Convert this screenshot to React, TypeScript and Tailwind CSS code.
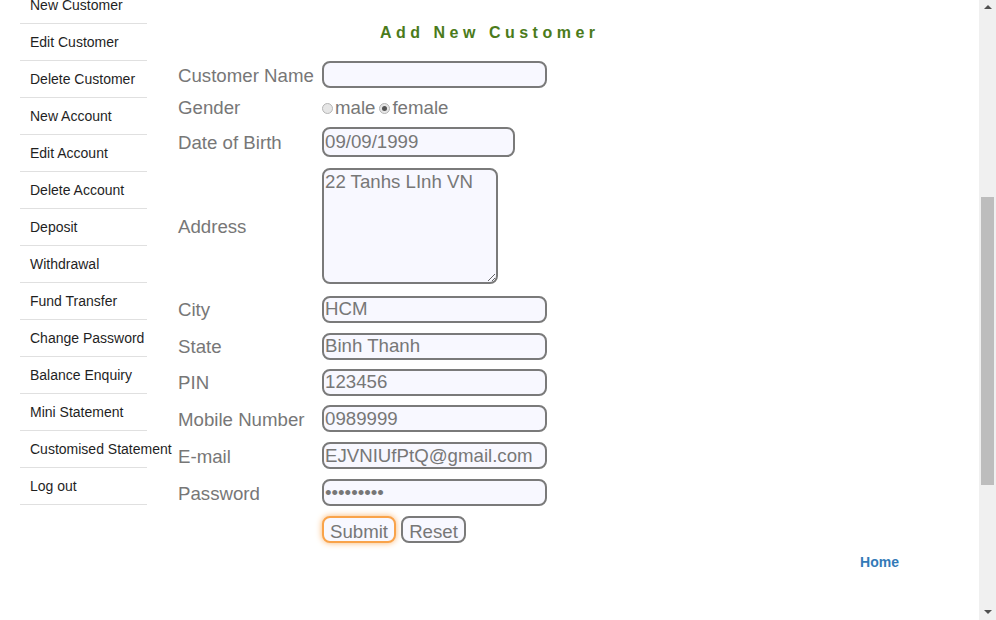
import React from 'react'

const menu = [
  'New Customer',
  'Edit Customer',
  'Delete Customer',
  'New Account',
  'Edit Account',
  'Delete Account',
  'Deposit',
  'Withdrawal',
  'Fund Transfer',
  'Change Password',
  'Balance Enquiry',
  'Mini Statement',
  'Customised Statement',
  'Log out',
]

const inputCls =
  'h-[27px] rounded-[8px] border-2 border-[#7a7a7a] bg-[#f8f8ff] px-[1px] text-[18.67px] text-[#777] outline-none'

function Row({ label, h, children }: { label: string; h: string; children?: React.ReactNode }) {
  return (
    <div className={`flex items-center ${h}`}>
      <div className="w-[144px] pt-[2px] text-[18.67px] text-[#777]">{label}</div>
      <div className="flex items-center">{children}</div>
    </div>
  )
}

function Radio({ checked }: { checked?: boolean }) {
  return (
    <span className="flex h-[11px] w-[11px] shrink-0 items-center justify-center rounded-full border border-[#b5b5b5] bg-[#e6e6e6]">
      {checked && <span className="h-[5px] w-[5px] rounded-full bg-[#555]" />}
    </span>
  )
}

export default function App() {
  return (
    <div className="flex h-[620px] w-[996px] overflow-hidden bg-white font-['Liberation_Sans',Arial,sans-serif]">
      <div className="flex w-[979px]">
        {/* left menu */}
        <ul className="ml-[20px] -mt-[14px] w-[127px] shrink-0 border-t border-[#e0e0e0]">
          {menu.map(m => (
            <li
              key={m}
              className="flex h-[37px] items-center whitespace-nowrap border-b border-[#e0e0e0] pl-[10px] text-[14px] text-[#1f1f1f]"
            >
              {m}
            </li>
          ))}
        </ul>

        {/* form */}
        <div className="ml-[31px] flex flex-1 flex-col">
          <p className="ml-[202px] mt-[23px] h-[20px] text-[16px] font-bold leading-[20px] tracking-[4.5px] text-[#4b7b1b]">
            Add New Customer
          </p>
          <div className="mt-[15px] flex flex-col">
            <Row label="Customer Name" h="h-[33px]">
              <input className={`${inputCls} w-[225px]`} readOnly defaultValue="" />
            </Row>
            <Row label="Gender" h="h-[32px]">
              <div className="flex items-center pt-[2px] text-[18.67px] text-[#777]">
                <Radio />
                <span className="ml-[2px]">male</span>
                <span className="ml-[4px]">
                  <Radio checked />
                </span>
                <span className="ml-[2px]">female</span>
              </div>
            </Row>
            <Row label="Date of Birth" h="h-[38px]">
              <input className={`${inputCls} h-[30px] w-[193px]`} readOnly defaultValue="09/09/1999" />
            </Row>
            <Row label="Address" h="h-[129px]">
              <textarea
                className="h-[116px] w-[176px] rounded-[8px] border-2 border-[#7a7a7a] bg-[#f8f8ff] px-[1px] pt-[1px] text-[18.67px] leading-[22px] text-[#777] outline-none"
                readOnly
                defaultValue="22 Tanhs LInh VN"
              />
            </Row>
            <Row label="City" h="h-[38px]">
              <input className={`${inputCls} w-[225px]`} readOnly defaultValue="HCM" />
            </Row>
            <Row label="State" h="h-[36px]">
              <input className={`${inputCls} w-[225px]`} readOnly defaultValue="Binh Thanh" />
            </Row>
            <Row label="PIN" h="h-[36px]">
              <input className={`${inputCls} w-[225px]`} readOnly defaultValue="123456" />
            </Row>
            <Row label="Mobile Number" h="h-[37px]">
              <input className={`${inputCls} w-[225px]`} readOnly defaultValue="0989999" />
            </Row>
            <Row label="E-mail" h="h-[37px]">
              <input className={`${inputCls} w-[225px]`} readOnly defaultValue="EJVNIUfPtQ@gmail.com" />
            </Row>
            <Row label="Password" h="h-[37px]">
              <input type="password" className={`${inputCls} w-[225px]`} readOnly defaultValue="123456789" />
            </Row>
            <Row label="" h="h-[37px]">
              <button className="h-[27px] w-[74px] rounded-[8px] border-2 border-[#f9a34a] bg-[#f8f8ff] text-[18.67px] text-[#777] shadow-[0_0_6px_#fbb36a]">
                Submit
              </button>
              <button className="ml-[5px] h-[27px] w-[65px] rounded-[8px] border-2 border-[#7a7a7a] bg-[#f8f8ff] text-[18.67px] text-[#777]">
                Reset
              </button>
            </Row>
          </div>
          <div className="mt-[6px] flex justify-end pr-[80px]">
            <a className="text-[14px] font-bold leading-[16px] text-[#337ab7]">Home</a>
          </div>
        </div>
      </div>

      {/* scrollbar */}
      <div className="flex w-[17px] flex-col items-center bg-[#f0f0f0]">
        <div className="mt-[5px] h-0 w-0 border-x-[4px] border-b-[4px] border-x-transparent border-b-[#505050]" />
        <div className="mt-[188px] h-[288px] w-[13px] bg-[#bdbdbd]" />
        <div className="mt-auto mb-[6px] h-0 w-0 border-x-[4px] border-t-[4px] border-x-transparent border-t-[#505050]" />
      </div>
    </div>
  )
}
